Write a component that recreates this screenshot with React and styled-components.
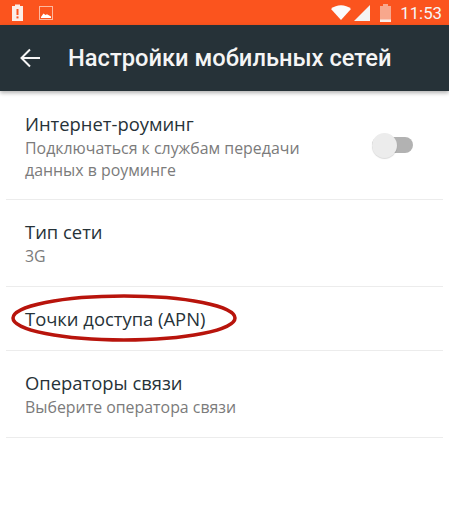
import styled, { createGlobalStyle } from 'styled-components';

const GlobalStyle = createGlobalStyle`
	html, body {
		margin: 0;
		padding: 0;
		background: #ffffff;
	}
`;

const items = [
	{ title: 'Интернет-роуминг', lines: ['Подключаться к службам передачи', 'данных в роуминге'], toggle: true, height: 104, lift: 3 },
	{ title: 'Тип сети', lines: ['3G'], height: 87 },
	{ title: 'Точки доступа (APN)', lines: [], circled: true, height: 64 },
	{ title: 'Операторы связи', lines: ['Выберите оператора связи'], height: 87 },
];

export default function App() {
	return (
		<Screen>
			<GlobalStyle />
			<StatusBar>
				<StatusGroup>
					<svg width='11' height='17' viewBox='0 0 11 17'>
						<path d='M0 2h3V.5h5V2h3v15H0z' fill='#fbeee8' />
						<rect x='4.500' y='5' width='2' height='6' fill='#fb541e' />
						<rect x='4.500' y='12.400' width='2' height='2' fill='#fb541e' />
					</svg>
					<svg width='14' height='14' viewBox='0 0 14 14'>
						<rect x='.5' y='.5' width='13' height='13' fill='none' stroke='#fdb89f' />
						<path d='M2 11 4.500 7.500l2 1.500 1.500-.8L12 10.500V12H2z' fill='#fff' />
					</svg>
				</StatusGroup>
				<StatusIcons>
					<svg width='20' height='15' viewBox='0 0 20 15'>
						<path d='M0 4C5.500-1 14.500-1 20 4L10 15z' fill='#fbfbfb' />
					</svg>
					<Signal width='16' height='16' viewBox='0 0 16 16'>
						<path d='M16 0v16H0z' fill='#f4f4f4' />
					</Signal>
					<Battery width='11' height='18' viewBox='0 0 11 18'>
						<path d='M0 2h3V0h5v2h3v16H0z' fill='#f8a78c' />
						<rect y='15.500' width='11' height='2.500' fill='#fbeee8' />
					</Battery>
					<Clock>11:53</Clock>
				</StatusIcons>
			</StatusBar>
			<Toolbar>
				<svg width='20' height='20' viewBox='0 0 20 20'>
					<path d='M20 10H2M10 1.500 1.500 10l8.500 8.500' fill='none' stroke='#f5f5f5' strokeWidth='2' />
				</svg>
				<Title>Настройки мобильных сетей</Title>
			</Toolbar>
			<List>
				{items.map((item) => (
					<Row key={item.title} $height={item.height} $lift={item.lift}>
						<RowText>
							<RowTitle>{item.title}</RowTitle>
							{item.lines.map((line) => (
								<RowLine key={line}>{line}</RowLine>
							))}
						</RowText>
						{item.toggle && (
							<Switch>
								<SwitchThumb />
							</Switch>
						)}
						{item.circled && (
							<Oval width='228' height='52' viewBox='0 0 228 52'>
								<ellipse cx='114' cy='26' rx='111' ry='22' fill='none' stroke='#b8140c' strokeWidth='3.500' />
							</Oval>
						)}
					</Row>
				))}
			</List>
		</Screen>
	);
}

const Screen = styled.div`
	width: 449px;
	height: 516px;
	overflow: hidden;
	background: #ffffff;
	font-family: 'Open Sans', 'Noto Sans', sans-serif;
`;

const StatusBar = styled.div`
	height: 25px;
	background: #fb541e;
	display: flex;
	align-items: center;
	justify-content: space-between;
	padding: 0 7px 0 12px;
`;

const StatusGroup = styled.div`
	display: flex;
	align-items: center;
	gap: 16px;
`;

const StatusIcons = styled.div`
	display: flex;
	align-items: center;
`;

const Signal = styled.svg`
	margin-left: 3px;
`;

const Battery = styled.svg`
	margin-left: 10px;
`;

const Clock = styled.span`
	font-family: Roboto, sans-serif;
	font-size: 16.800px;
	color: #f5f5f5;
	margin-left: 9px;
`;

const Toolbar = styled.header`
	height: 66px;
	background: #263238;
	display: flex;
	align-items: center;
	gap: 28px;
	padding-left: 20px;
	box-shadow: 0 2px 4px rgb(0 0 0 / 30%);
	position: relative;
`;

const Title = styled.h1`
	margin: 0;
	font-family: Roboto, sans-serif;
	font-size: 23.700px;
	font-weight: 500;
	color: #f5f5f5;
	white-space: nowrap;
`;

const List = styled.div`
	padding: 0 6px;
	margin-top: 5px;
`;

const Row = styled.div`
	position: relative;
	height: ${({ $height }) => $height}px;
	box-sizing: border-box;
	border-bottom: 1px solid #ececec;
	display: flex;
	align-items: center;
	justify-content: space-between;
	padding: 0 30px ${({ $lift }) => $lift || 0}px 19px;
`;

const RowText = styled.div`
	display: flex;
	flex-direction: column;
`;

const RowTitle = styled.div`
	font-size: 18.400px;
	line-height: 26px;
	color: #263238;
`;

const RowLine = styled.div`
	font-size: 15.900px;
	line-height: 22px;
	color: #7b7b7b;
`;

const Switch = styled.div`
	position: relative;
	width: 41px;
	height: 16px;
	margin-bottom: 2px;
	border-radius: 8px;
	background: #b2b2b2;
`;

const SwitchThumb = styled.div`
	position: absolute;
	left: 0;
	top: -4px;
	width: 25px;
	height: 25px;
	border-radius: 50%;
	background: #ececec;
	box-shadow: 0 1px 1px rgb(0 0 0 / 15%);
`;

const Oval = styled.svg`
	position: absolute;
	left: 4px;
	top: 5px;
`;
